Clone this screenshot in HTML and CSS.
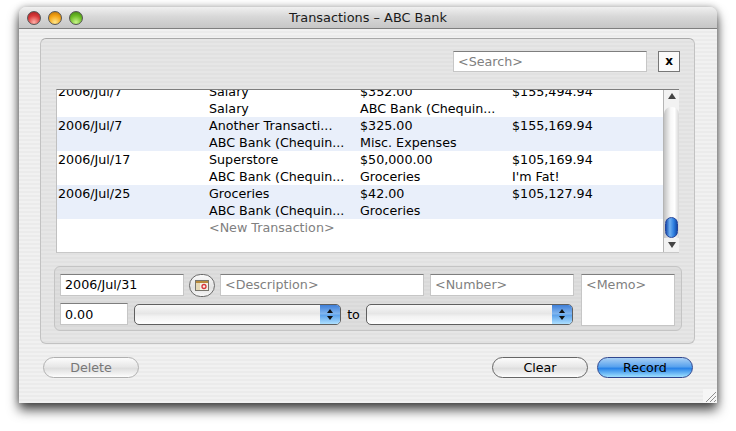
FILE: index.html
```html
<!DOCTYPE html>
<html lang="en">
<head>
    <meta charset="UTF-8">
    <title>Transactions - ABC Bank</title>
    <link rel="stylesheet" href="styles.css">
</head>
<body>
    <div class="window">
        <div class="titlebar">
            <div class="lights">
                <span class="light light-red"></span>
                <span class="light light-yellow"></span>
                <span class="light light-green"></span>
            </div>
            <div class="title">Transactions – ABC Bank</div>
        </div>

        <div class="content">
            <div class="panel">
                <div class="search-row">
                    <div class="field search-field placeholder">&lt;Search&gt;</div>
                    <div class="close-button">x</div>
                </div>

                <div class="list">
                    <div class="rows">
                        <div class="row">
                            <span>2006/Jul/7</span><span>Salary</span><span>$352.00</span><span>$155,494.94</span>
                            <span></span><span>Salary</span><span>ABC Bank (Chequin...</span><span></span>
                        </div>
                        <div class="row row-alt">
                            <span>2006/Jul/7</span><span>Another Transacti...</span><span>$325.00</span><span>$155,169.94</span>
                            <span></span><span>ABC Bank (Chequin...</span><span>Misc. Expenses</span><span></span>
                        </div>
                        <div class="row">
                            <span>2006/Jul/17</span><span>Superstore</span><span>$50,000.00</span><span>$105,169.94</span>
                            <span></span><span>ABC Bank (Chequin...</span><span>Groceries</span><span>I'm Fat!</span>
                        </div>
                        <div class="row row-alt">
                            <span>2006/Jul/25</span><span>Groceries</span><span>$42.00</span><span>$105,127.94</span>
                            <span></span><span>ABC Bank (Chequin...</span><span>Groceries</span><span></span>
                        </div>
                        <div class="row">
                            <span></span><span class="placeholder">&lt;New Transaction&gt;</span><span></span><span></span>
                        </div>
                    </div>
                    <div class="scrollbar">
                        <div class="arrow-box"><span class="arrow-up"></span></div>
                        <div class="track"><div class="thumb"></div></div>
                        <div class="arrow-box arrow-box-down"><span class="arrow-down"></span></div>
                    </div>
                </div>

                <div class="entry">
                    <div class="entry-main">
                        <div class="entry-row">
                            <div class="field date-field">2006/Jul/31</div>
                            <div class="calendar-button">
                                <svg width="14" height="11" viewBox="0 0 14 11">
                                    <rect x="0.5" y="0.5" width="13" height="10" fill="#f4f1e6" stroke="#77756d"/>
                                    <rect x="1" y="1" width="12" height="2" fill="#b98a3c"/>
                                    <rect x="1" y="3" width="4" height="7" fill="#e6d9b6"/>
                                    <circle cx="9" cy="6.5" r="2" fill="none" stroke="#d8343a" stroke-width="1.3"/>
                                </svg>
                            </div>
                            <div class="field description-field placeholder">&lt;Description&gt;</div>
                            <div class="field number-field placeholder">&lt;Number&gt;</div>
                        </div>
                        <div class="entry-row entry-row-lower">
                            <div class="field amount-field">0.00</div>
                            <div class="select">
                                <span class="select-arrows"><span class="arrow-up"></span><span class="arrow-down"></span></span>
                            </div>
                            <span class="to-label">to</span>
                            <div class="select">
                                <span class="select-arrows"><span class="arrow-up"></span><span class="arrow-down"></span></span>
                            </div>
                        </div>
                    </div>
                    <div class="field memo-field placeholder">&lt;Memo&gt;</div>
                </div>
            </div>

            <div class="actions">
                <div class="button button-disabled">Delete</div>
                <div class="actions-right">
                    <div class="button">Clear</div>
                    <div class="button button-default">Record</div>
                </div>
            </div>
        </div>

        <svg class="grip" width="14" height="14" viewBox="0 0 14 14">
            <rect width="14" height="14" fill="#f6f6f6"/>
            <path d="M3 13 13 3M7 13 13 7M11 13 13 11" stroke="#8f8f8f" fill="none"/>
        </svg>
    </div>
</body>
</html>
```

FILE: styles.css
```css
body {
    margin: 0;
    height: 431px;
    padding-top: 7px;
    box-sizing: border-box;
    overflow: hidden;
    background-color: white;
    font-family: "DejaVu Sans", sans-serif;
    font-size: 12.7px;
    color: #000;
}

.window {
    position: relative;
    width: 698px;
    height: 396px;
    margin-left: 19px;
    border-radius: 7px 7px 0 0;
    background-color: #ececec;
    box-shadow: 0 7px 12px rgba(0, 0, 0, 0.7), 0 0 7px rgba(0, 0, 0, 0.3);
}

.titlebar {
    display: flex;
    align-items: center;
    height: 21px;
    border-radius: 7px 7px 0 0;
    border-bottom: 1px solid #7f7f7f;
    background: linear-gradient(#f0f0f0, #d8d8d8 45%, #c6c6c6);
}

.lights {
    display: flex;
    gap: 7px;
    margin-left: 8px;
}

.light {
    width: 14px;
    height: 14px;
    border-radius: 50%;
    border: 0.5px solid #555;
    box-sizing: border-box;
}

.light-red {
    background: radial-gradient(circle at 50% 85%, #ffb0a8, #d8393a 55%, #a01c20);
}

.light-yellow {
    background: radial-gradient(circle at 50% 85%, #ffe68a, #f5a313 55%, #b56c08);
}

.light-green {
    background: radial-gradient(circle at 50% 85%, #c8f58a, #6cbb25 55%, #3d7f12);
}

.title {
    flex: 1;
    margin-left: -64px;
    text-align: center;
    font-size: 12.9px;
    color: #1a1a1a;
}

.content {
    height: 374px;
    padding: 9px 22px 0 21px;
    box-sizing: border-box;
    background-image: repeating-linear-gradient(#f1f1f1 0, #f1f1f1 2px, #ebebeb 2px, #ebebeb 4px);
}

.panel {
    height: 306px;
    padding: 12px 15px 0 15px;
    box-sizing: border-box;
    border: 1px solid #c2c2c2;
    border-top-color: #a8a8a8;
    border-radius: 6px;
    background-image: repeating-linear-gradient(#e6e6e6 0, #e6e6e6 2px, #e1e1e1 2px, #e1e1e1 4px);
}

.search-row {
    display: flex;
    justify-content: flex-end;
    gap: 11px;
    height: 38px;
    margin-right: -1px;
}

.field {
    box-sizing: border-box;
    padding: 2px 0 0 4px;
    background-color: white;
    border: 1px solid #c6c6c6;
    border-top-color: #7e7e7e;
    line-height: 16px;
    white-space: nowrap;
}

.placeholder {
    color: #808080;
}

.search-field {
    width: 194px;
    height: 21px;
}

.close-button {
    width: 22px;
    height: 21px;
    box-sizing: border-box;
    border: 1px solid #777;
    background-color: #fafafa;
    text-align: center;
    line-height: 19px;
    font-size: 12px;
    font-weight: bold;
}

.list {
    display: flex;
    height: 164px;
    overflow: hidden;
    background-color: white;
    border-top: 1px solid #7e7e7e;
    border-left: 1px solid #c0c0c0;
    border-bottom: 1px solid #c8c8c8;
    box-sizing: border-box;
}

.rows {
    flex: 1;
    margin-top: -7px;
}

.row {
    display: grid;
    grid-template-columns: 151px 151px 152px 1fr;
    grid-auto-rows: 17px;
    height: 34px;
    padding-left: 1px;
    line-height: 18px;
    white-space: nowrap;
}

.row-alt {
    background-color: #e9effa;
}

.scrollbar {
    display: flex;
    flex-direction: column;
    width: 15px;
    border-left: 1px solid #b5b5b5;
    background: #f2f2f2;
}

.arrow-box {
    display: flex;
    justify-content: center;
    align-items: center;
    height: 17px;
    padding-bottom: 5px;
    box-sizing: border-box;
}

.arrow-box-down {
    height: 14px;
    padding: 0;
}

.arrow-up {
    width: 0;
    height: 0;
    border-left: 4px solid transparent;
    border-right: 4px solid transparent;
    border-bottom: 6px solid #444;
}

.arrow-down {
    width: 0;
    height: 0;
    border-left: 4px solid transparent;
    border-right: 4px solid transparent;
    border-top: 6px solid #444;
}

.track {
    flex: 1;
    display: flex;
    flex-direction: column;
    justify-content: flex-end;
    border-radius: 7px 7px 0 0;
    background: linear-gradient(90deg, #c2c2c2, #f8f8f8 45%, #ffffff 70%, #d5d5d5);
}

.thumb {
    width: 13px;
    height: 21px;
    margin-left: 1px;
    border-radius: 7px;
    background: linear-gradient(90deg, #1a4fb0, #6fb0f0 35%, #2f7fe0 70%, #134ca8);
    border: 1px solid #27459a;
    box-sizing: border-box;
}

.entry {
    display: flex;
    gap: 7px;
    width: 628px;
    height: 65px;
    margin: 13px 0 0 -2px;
    padding: 7px 6px 0 5px;
    box-sizing: border-box;
    border: 1px solid #c4c4c4;
    border-radius: 6px;
    background-image: repeating-linear-gradient(#dedede 0, #dedede 2px, #d9d9d9 2px, #d9d9d9 4px);
}

.entry-main {
    display: flex;
    flex-direction: column;
    gap: 7px;
}

.entry-row {
    display: flex;
    align-items: center;
    height: 22px;
    gap: 5px;
}

.entry-row-lower {
    gap: 6px;
}

.date-field {
    width: 124px;
    height: 22px;
}

.calendar-button {
    display: flex;
    justify-content: center;
    align-items: center;
    width: 26px;
    height: 23px;
    box-sizing: border-box;
    border: 1px solid #6a6a6a;
    border-radius: 12px;
    background: linear-gradient(#fafafa, #e2e2e2 60%, #f6f6f6);
}

.description-field {
    width: 204px;
    height: 22px;
}

.number-field {
    width: 144px;
    height: 22px;
    margin-left: 1px;
}

.amount-field {
    width: 68px;
    height: 22px;
    padding-top: 3px;
}

.select {
    display: flex;
    justify-content: flex-end;
    width: 207px;
    height: 21px;
    box-sizing: border-box;
    border: 1px solid #5f5f5f;
    border-radius: 5px;
    overflow: hidden;
    background: linear-gradient(#f8f8f8, #e6e6e6 45%, #f2f2f2 60%, #ffffff);
}

.select-arrows {
    display: flex;
    flex-direction: column;
    justify-content: center;
    align-items: center;
    gap: 3px;
    width: 20px;
    background: linear-gradient(#3f7fd8, #7fb4ee 45%, #5fa4ec 55%, #aee0ff);
}

.select-arrows .arrow-up {
    border-left-width: 3px;
    border-right-width: 3px;
    border-bottom: 4px solid #111;
}

.select-arrows .arrow-down {
    border-left-width: 3px;
    border-right-width: 3px;
    border-top: 4px solid #111;
}

.to-label {
    width: 13px;
    text-align: center;
}

.memo-field {
    width: 94px;
    height: 52px;
}

.actions {
    display: flex;
    justify-content: space-between;
    margin: 13px 2px 0 3px;
}

.actions-right {
    display: flex;
    gap: 9px;
}

.button {
    width: 96px;
    height: 21px;
    box-sizing: border-box;
    border: 1px solid #666;
    border-radius: 11px;
    text-align: center;
    line-height: 20px;
    background: linear-gradient(#fcfcfc, #e8e8e8 45%, #dedede 55%, #fdfdfd);
}

.button-disabled {
    color: #777;
    border-color: #b0b0b0;
}

.button-default {
    border-color: #30478f;
    background: linear-gradient(#a9d0f5, #5aa3ee 45%, #2a84e8 55%, #9ee0ff);
}

.grip {
    position: absolute;
    right: 0;
    bottom: 0;
}
```
